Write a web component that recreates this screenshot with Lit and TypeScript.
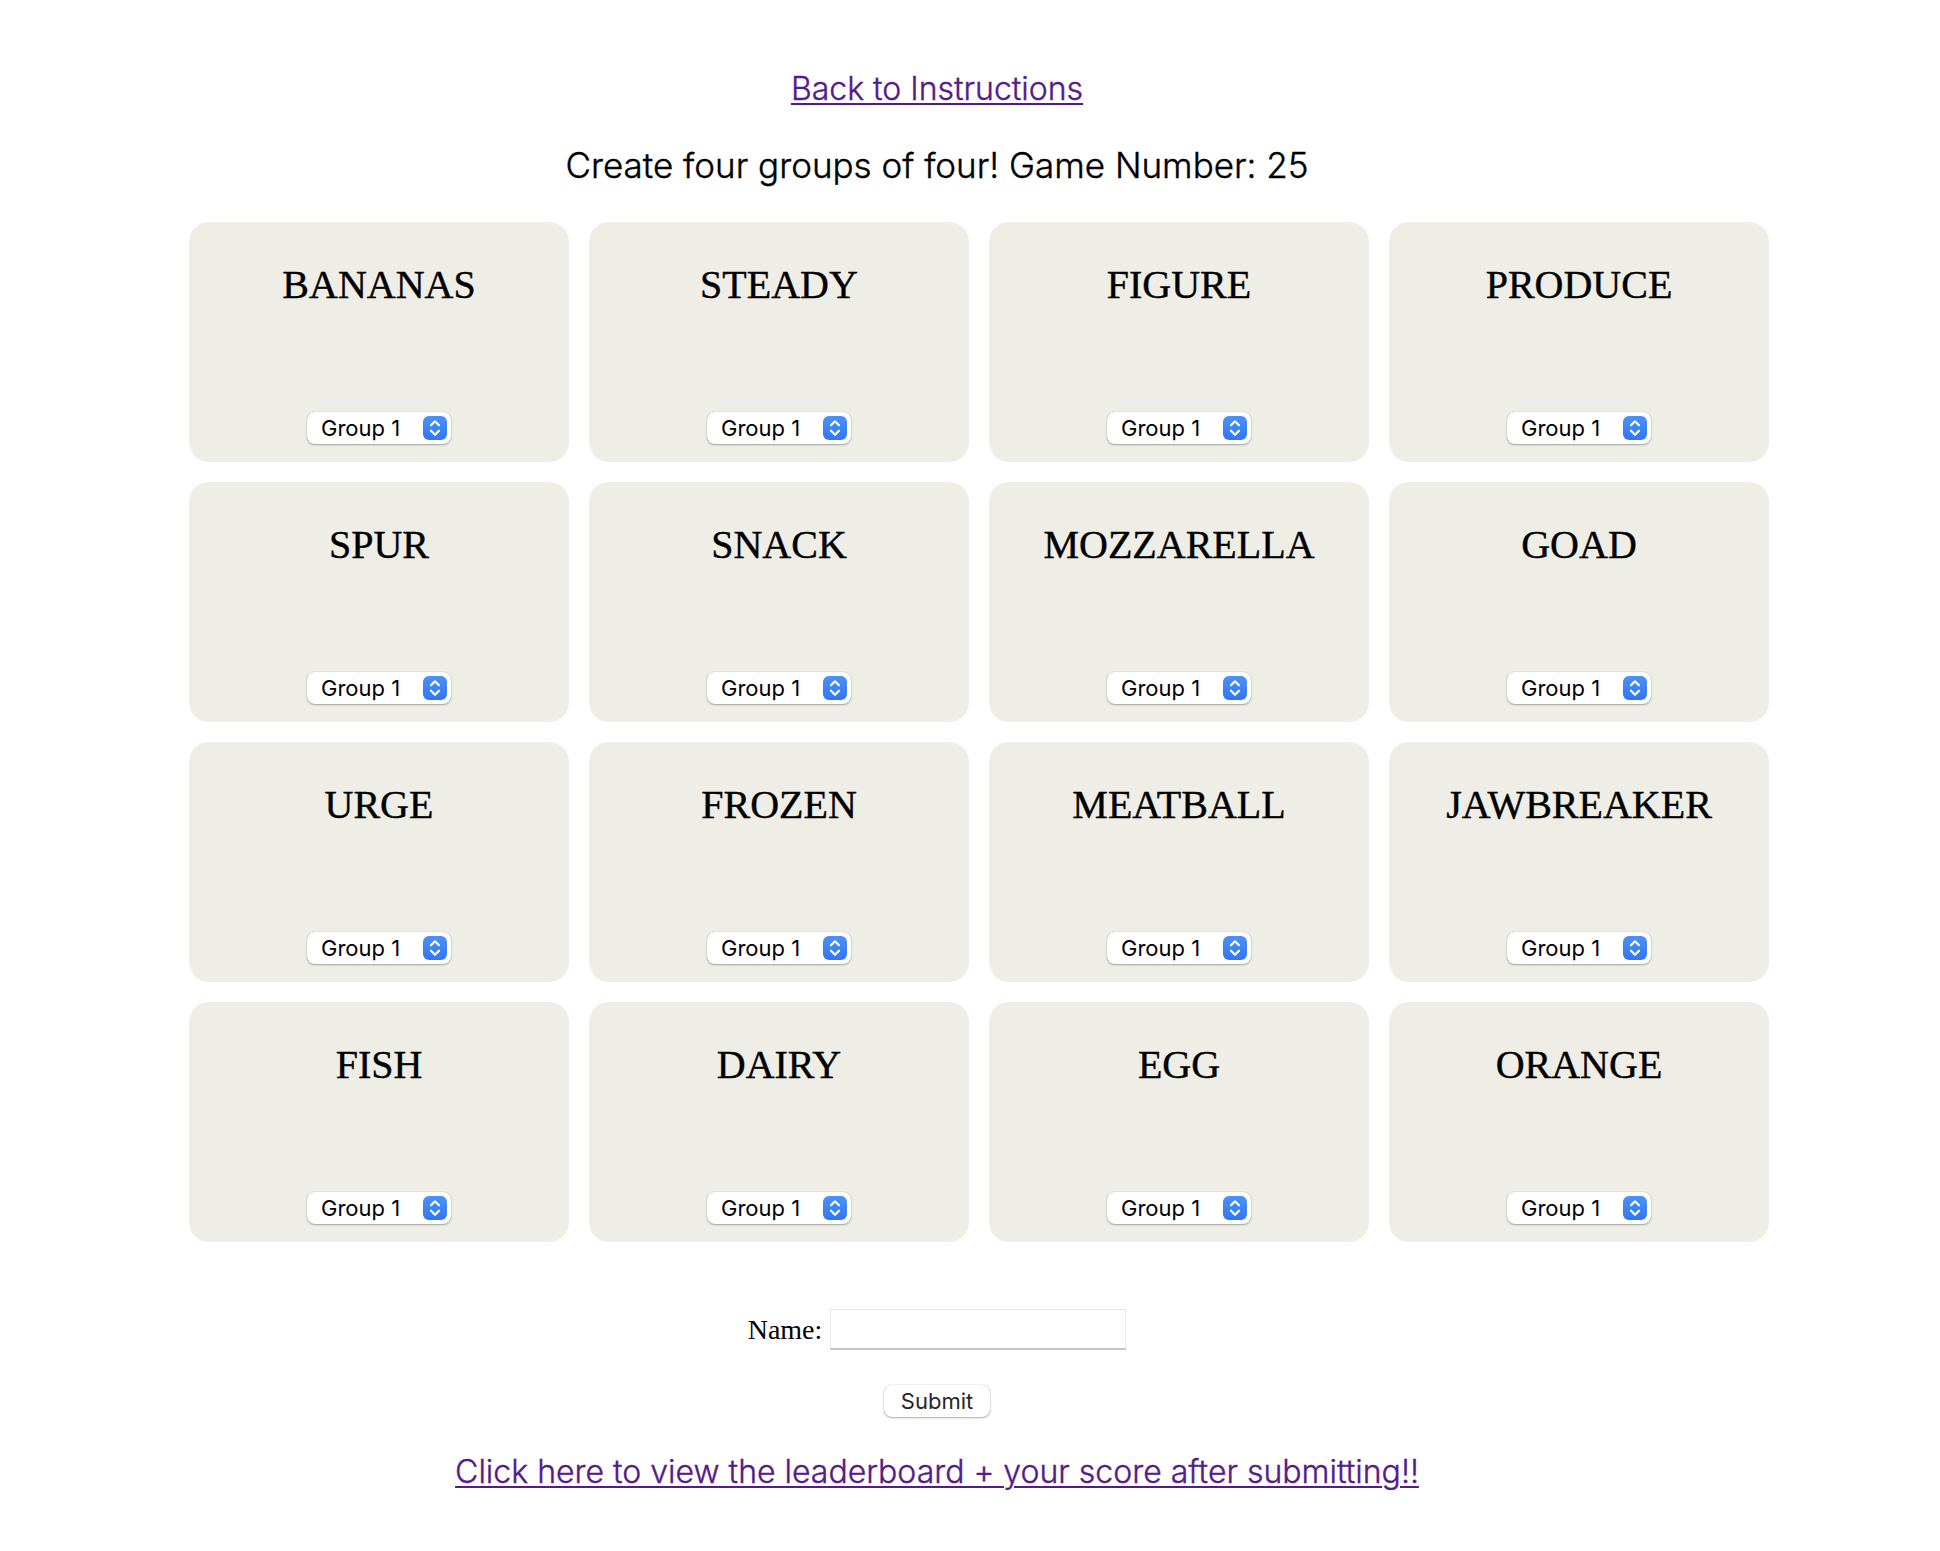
import { LitElement, html, css } from "lit";
import { customElement, property } from "lit/decorators.js";

const GAME_NUMBER = 25;

const WORDS = [
  "BANANAS", "STEADY", "FIGURE", "PRODUCE",
  "SPUR", "SNACK", "MOZZARELLA", "GOAD",
  "URGE", "FROZEN", "MEATBALL", "JAWBREAKER",
  "FISH", "DAIRY", "EGG", "ORANGE",
];

const GROUPS = [1, 2, 3, 4];

@customElement("word-card")
class WordCard extends LitElement {
  @property() word = "";

  static styles = css`
    :host {
      display: flex;
      flex-direction: column;
      align-items: center;
      justify-content: space-between;
      box-sizing: border-box;
      min-height: 240px;
      padding: 40px 16px 18px;
      border-radius: 20px;
      background: #efeee6;
    }
    .word {
      font: 40px/46px "Liberation Serif", "Times New Roman", serif;
      color: #000;
      -webkit-text-stroke: 0.4px #000;
    }
    .picker {
      position: relative;
      display: flex;
    }
    .select {
      appearance: none;
      width: 144px;
      height: 32px;
      padding: 0 40px 0 14px;
      border: 0;
      border-radius: 8px;
      background: #fff;
      box-shadow: 0 0 1px rgba(0, 0, 0, 0.3), 0 1px 2px rgba(0, 0, 0, 0.3);
      color: #000;
      font: 22px/32px Inter, sans-serif;
    }
    .stepper {
      position: absolute;
      top: 4px;
      right: 4px;
      width: 24px;
      height: 24px;
      pointer-events: none;
    }
  `;

  render() {
    return html`
      <label class="word" for="group">${this.word}</label>
      <div class="picker">
        <select class="select" id="group">
          ${GROUPS.map((n) => html`<option value=${n}>Group ${n}</option>`)}
        </select>
        <svg class="stepper" viewBox="0 0 24 24" aria-hidden="true">
          <defs>
            <linearGradient id="fill" x1="0" y1="0" x2="0" y2="1">
              <stop offset="0" stop-color="#4a92f8"></stop>
              <stop offset="1" stop-color="#3276f6"></stop>
            </linearGradient>
          </defs>
          <rect width="24" height="24" rx="6" fill="url(#fill)"></rect>
          <path
            d="M8 9.3 12 5.3 16 9.3M8 14.7 12 18.7 16 14.7"
            fill="none"
            stroke="#fff"
            stroke-width="2.2"
            stroke-linecap="round"
            stroke-linejoin="round"
          ></path>
        </svg>
      </div>
    `;
  }
}

@customElement("app-root")
class AppRoot extends LitElement {
  static styles = css`
    :host {
      display: block;
      background: #fff;
      color: #000;
    }
    .page {
      display: flex;
      flex-direction: column;
      align-items: center;
      margin: 0 171px 0 105px;
      padding: 69px 0 60px;
    }
    .link {
      font: 300 32px/40px Inter, sans-serif;
      color: #551a8b;
      -webkit-text-stroke: 0.4px #551a8b;
      text-decoration: underline;
      text-decoration-thickness: 2px;
      text-underline-offset: 3px;
    }
    .title {
      margin: 33px 0 0;
      font: 300 35px/46px Inter, sans-serif;
      -webkit-text-stroke: 0.4px #000;
    }
    .grid {
      align-self: stretch;
      display: grid;
      grid-template-columns: repeat(4, 1fr);
      gap: 20px;
      margin: 34px 0 67px;
      padding-left: 84px;
    }
    .form {
      display: flex;
      flex-direction: column;
      align-items: center;
      gap: 35px;
      margin-bottom: 35px;
    }
    .field {
      display: flex;
      align-items: center;
      gap: 8px;
      font: 28px/40px "Liberation Serif", "Times New Roman", serif;
    }
    .input {
      box-sizing: border-box;
      width: 296px;
      height: 41px;
      padding: 2px 6px;
      border: 1px solid #e6e6e6;
      border-bottom: 2px solid #c4c4c4;
      background: #fff;
      font: 22px Inter, sans-serif;
    }
    .submit {
      height: 32px;
      padding: 0 17px;
      border: 0;
      border-radius: 8px;
      background: #fff;
      box-shadow: 0 0 1px rgba(0, 0, 0, 0.35), 0 1px 2px rgba(0, 0, 0, 0.3);
      color: #262626;
      font: 22px/32px Inter, sans-serif;
    }
  `;

  render() {
    return html`
      <main class="page">
        <a class="link" href="#instructions">Back to Instructions</a>
        <h1 class="title">Create four groups of four! Game Number: ${GAME_NUMBER}</h1>
        <section class="grid">
          ${WORDS.map((word) => html`<word-card .word=${word}></word-card>`)}
        </section>
        <form class="form" @submit=${(e: Event) => e.preventDefault()}>
          <div class="field">
            <label for="name">Name:</label>
            <input class="input" id="name" name="name" type="text" />
          </div>
          <button class="submit" type="submit">Submit</button>
        </form>
        <a class="link" href="#leaderboard">Click here to view the leaderboard + your score after submitting!!</a>
      </main>
    `;
  }
}
